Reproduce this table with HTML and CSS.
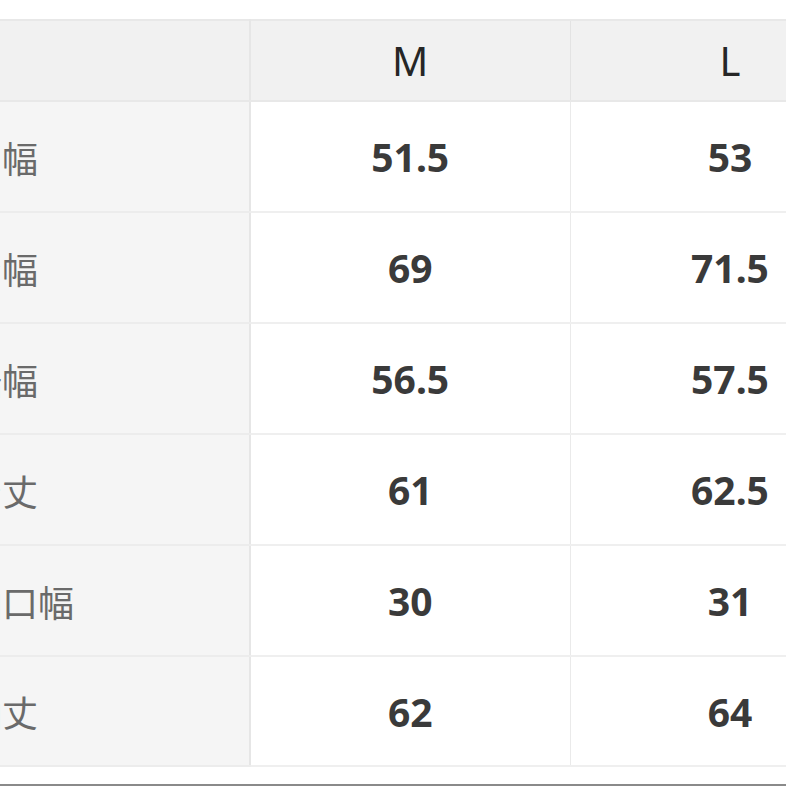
FILE: index.html
```html
<!DOCTYPE html>
<html lang="ja">
<head>
<meta charset="utf-8">
<link rel="stylesheet" href="styles.css">
</head>
<body>
<div class="page">
  <table class="size-table">
    <colgroup>
      <col class="c-label">
      <col class="c-size">
      <col class="c-size">
    </colgroup>
    <thead>
      <tr>
        <th class="corner"></th>
        <th>M</th>
        <th>L</th>
      </tr>
    </thead>
    <tbody>
      <tr><th class="label">肩幅</th><td>51.5</td><td>53</td></tr>
      <tr><th class="label">身幅</th><td>69</td><td>71.5</td></tr>
      <tr><th class="label">裾幅</th><td>56.5</td><td>57.5</td></tr>
      <tr><th class="label">着丈</th><td>61</td><td>62.5</td></tr>
      <tr><th class="label">袖口幅</th><td>30</td><td>31</td></tr>
      <tr><th class="label">袖丈</th><td>62</td><td>64</td></tr>
    </tbody>
  </table>
  <div class="bottom-rule"></div>
</div>
</body>
</html>
```
FILE: styles.css
```css
html, body {
  margin: 0;
  padding: 0;
  background: #ffffff;
  overflow: hidden;
}

.page {
  width: 786px;
  height: 786px;
  overflow: hidden;
  padding-top: 19px;
  box-sizing: border-box;
}

.size-table {
  margin-left: -34px;
  border-collapse: collapse;
  table-layout: fixed;
  width: 924px;
  font-family: "Noto Sans", "Open Sans", sans-serif;
}

.c-label { width: 284px; }
.c-size { width: 320px; }

.size-table thead th {
  height: 79px;
  background: #f1f1f1;
  color: #262626;
  font-weight: 400;
  font-size: 40px;
  text-align: center;
  vertical-align: middle;
  padding: 0;
  border-top: 2px solid #e8e8e8;
  border-bottom: 2px solid #e8e8e8;
  border-right: 1px solid #e3e3e3;
}

.size-table thead th.corner {
  border-right: 2px solid #e6e6e6;
}

.size-table tbody td,
.size-table tbody th {
  height: 109px;
  padding: 0;
  vertical-align: middle;
  border-bottom: 2px solid #efefef;
}

.size-table tbody tr:last-child td,
.size-table tbody tr:last-child th {
  height: 108px;
}

.size-table tbody th.label {
  background: #f5f5f5;
  color: #6a6a6a;
  font-family: "Noto Sans CJK JP", "Noto Sans", sans-serif;
  font-weight: 400;
  font-size: 36px;
  text-align: left;
  border-right: 2px solid #e6e6e6;
  border-bottom-color: #ececec;
}

.size-table tbody td {
  background: #ffffff;
  color: #3a3a3a;
  font-weight: 700;
  font-size: 39px;
  text-align: center;
  border-right: 1px solid #eaeaea;
}

.bottom-rule {
  margin-top: 17px;
  height: 2px;
  background: #8a8a8a;
}
```
